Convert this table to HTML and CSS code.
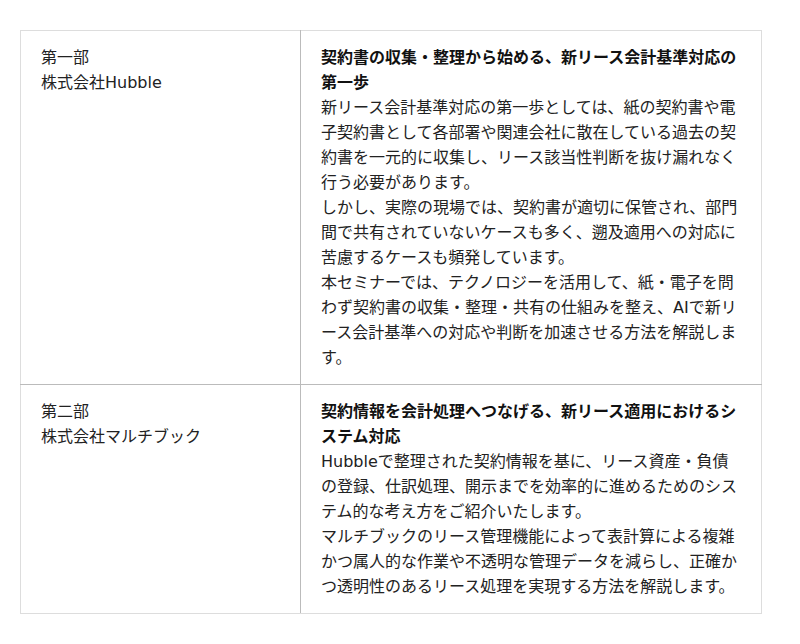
FILE: index.html
```html
<!DOCTYPE html>
<html lang="ja">
<head>
<meta charset="utf-8">
<title>セミナー内容</title>
<link rel="stylesheet" href="styles.css">
</head>
<body>
<div class="wrap">
  <table class="program">
    <tr>
      <td class="speaker">
        <p>第一部</p>
        <p>株式会社Hubble</p>
      </td>
      <td class="detail">
        <p class="title">契約書の収集・整理から始める、新リース会計基準対応の第一歩</p>
        <p>新リース会計基準対応の第一歩としては、紙の契約書や電子契約書として各部署や関連会社に散在している過去の契約書を一元的に収集し、リース該当性判断を抜け漏れなく行う必要があります。</p>
        <p>しかし、実際の現場では、契約書が適切に保管され、部門間で共有されていないケースも多く、遡及適用への対応に苦慮するケースも頻発しています。</p>
        <p>本セミナーでは、テクノロジーを活用して、紙・電子を問わず契約書の収集・整理・共有の仕組みを整え、AIで新リース会計基準への対応や判断を加速させる方法を解説します。</p>
      </td>
    </tr>
    <tr>
      <td class="speaker">
        <p>第二部</p>
        <p>株式会社マルチブック</p>
      </td>
      <td class="detail">
        <p class="title">契約情報を会計処理へつなげる、新リース適用におけるシステム対応</p>
        <p>Hubbleで整理された契約情報を基に、リース資産・負債の登録、仕訳処理、開示までを効率的に進めるためのシステム的な考え方をご紹介いたします。</p>
        <p>マルチブックのリース管理機能によって表計算による複雑かつ属人的な作業や不透明な管理データを減らし、正確かつ透明性のあるリース処理を実現する方法を解説します。</p>
      </td>
    </tr>
  </table>
</div>
</body>
</html>
```

FILE: styles.css
```css
html, body {
  margin: 0;
  padding: 0;
  background: #ffffff;
}
body {
  font-family: "DejaVu Sans", "Noto Sans CJK JP", sans-serif;
  font-size: 16px;
  line-height: 25px;
  color: #222222;
}
.wrap {
  padding: 30px 20px;
}
.program {
  width: 742px;
  border-collapse: collapse;
  border: 1px solid #dddddd;
  table-layout: fixed;
}
.program td {
  vertical-align: top;
  padding: 14px 20px;
  border: 1px solid #bbbbbb;
  line-break: loose;
}
.program tr:first-child td {
  border-top-color: #dddddd;
}
.program tr:last-child td {
  border-bottom-color: #dddddd;
}
.program td.speaker {
  width: 239px;
  border-left-color: #dddddd;
}
.program td.detail {
  border-right-color: #dddddd;
}
.program p {
  margin: 0;
}
.program p.title {
  font-weight: bold;
  color: #111111;
}
```
